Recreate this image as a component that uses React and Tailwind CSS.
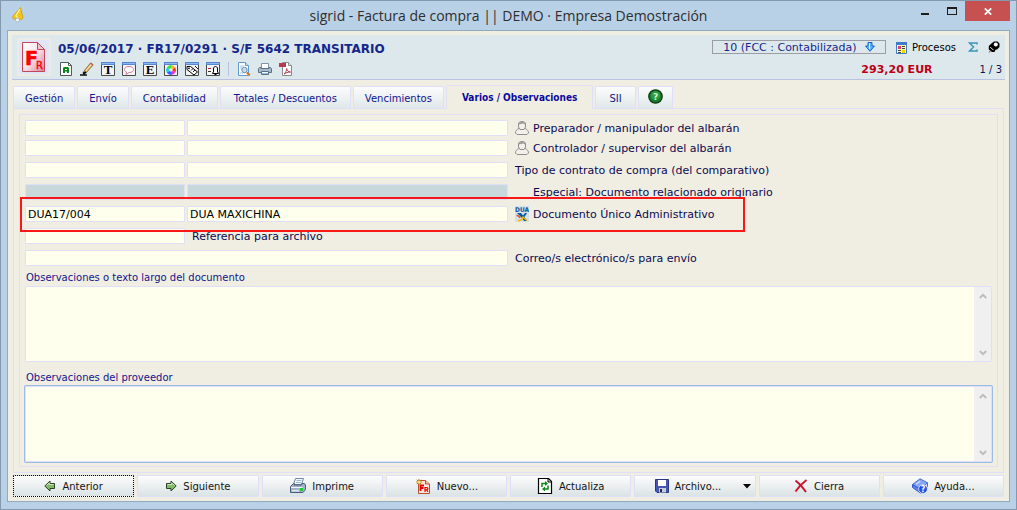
import React from "react";

const svg = (size, cls = "") => ({
  width: size,
  height: size,
  viewBox: `0 0 ${size} ${size}`,
  className: `shrink-0 ${cls}`,
  "aria-hidden": true,
});

/* ---------- title bar ---------- */

function BellIcon() {
  return (
    <svg {...svg(16)}>
      <path d="M9.500.500 2.500 8.500c-1.500 2-1 3 .5 3.500l7.500.5 1.500-1.500z" fill="#f5c518" stroke="#c99a10" strokeWidth=".8" />
      <path d="M9 2 5 8.500 6.500 11" fill="none" stroke="#fff3a0" strokeWidth="1.300" />
      <circle cx="6.500" cy="13" r="2" fill="#f4f6f8" stroke="#9aa9b8" strokeWidth=".7" />
    </svg>
  );
}

/* ---------- header icons ---------- */

function InvoiceIcon() {
  return (
    <svg width="24" height="32" viewBox="0 0 24 32" aria-hidden="true">
      <defs>
        <linearGradient id="invoiceFill" x1="0" y1="0" x2="1" y2="1">
          <stop offset="0" stopColor="#ffffff" />
          <stop offset=".5" stopColor="#f8e4ea" />
          <stop offset="1" stopColor="#dc7d92" />
        </linearGradient>
      </defs>
      <path d="M.5 1.500h15l7 7v22H.5z" fill="url(#invoiceFill)" stroke="#c2455e" />
      <path d="M15.500 1.500v7h7z" fill="#f4c5cf" stroke="#c2455e" />
      <text x="3" y="24" fontFamily="DejaVu Sans, sans-serif" fontWeight="700" fontSize="19" fill="#ff0000" stroke="#ff0000" strokeWidth=".6">
        F<tspan dx="-2" dy="4" fontSize="10" fontWeight="400" strokeWidth=".4">R</tspan>
      </text>
    </svg>
  );
}

function DocAIcon() {
  return (
    <svg {...svg(14)}>
      <path d="M1.500.5h8l3 3v10h-11z" fill="#fff" stroke="#4d5a55" />
      <path d="M9.500.5v3h3" fill="none" stroke="#4d5a55" />
      <path d="M4 11V6l1-1h4l1 1v5H8V9.500H6V11zM6 7v1h2V7z" fill="#0a8a1a" fillRule="evenodd" />
    </svg>
  );
}

function PencilIcon() {
  return (
    <svg {...svg(14)}>
      <path d="M4 9 10.500 1l2.500 2L6.500 10.500 3.500 11z" fill="#e2b768" stroke="#7a5a2c" strokeWidth=".8" />
      <path d="M5.500 9.500 11.500 2" stroke="#fbe5b5" strokeWidth="1" />
      <path d="m10.500 1 2.500 2" stroke="#c25a5a" strokeWidth="1.600" />
      <path d="M3.500 11 6 10l-2 2zM0 13h7" stroke="#111" strokeWidth="1.400" fill="#111" />
    </svg>
  );
}

function WindowIcon({ children }) {
  return (
    <svg {...svg(14)}>
      <path d="M.5.5h13v13H.5z" fill="#f4f4f4" stroke="#4a4a4a" />
      <path d="M0 0h14v3H0z" fill="#5586cf" />
      <path d="M1 1h12v1H1z" fill="#8db6ee" />
      {children}
    </svg>
  );
}

function LetterIcon({ letter }) {
  return (
    <WindowIcon>
      <text x="7" y="12" textAnchor="middle" fontFamily="Liberation Serif, serif" fontWeight="700" fontSize="13" fill="#000">
        {letter}
      </text>
    </WindowIcon>
  );
}

function SpeechIcon() {
  return (
    <WindowIcon>
      <path d="M7 4.500c3 0 4.500 1.300 4.500 3S10 10.500 7 10.500L4 12.500l.5-2.500C3.200 9.500 2.500 8.700 2.500 7.500c0-1.700 1.500-3 4.500-3z" fill="#fff" stroke="#cf7f9f" />
    </WindowIcon>
  );
}

function ColorIcon() {
  return (
    <WindowIcon>
      <path d="M7 8V3a5 5 0 0 1 4.300 2.500z" fill="#ffb020" />
      <path d="M7 8l4.300-2.500a5 5 0 0 1 0 5z" fill="#ff3030" />
      <path d="M7 8l4.300 2.500A5 5 0 0 1 7 13z" fill="#e030e0" />
      <path d="M7 8v5a5 5 0 0 1-4.300-2.500z" fill="#3060ff" />
      <path d="M7 8l-4.300 2.500a5 5 0 0 1 0-5z" fill="#20d0e0" />
      <path d="M7 8 2.700 5.500A5 5 0 0 1 7 3z" fill="#40e040" />
      <circle cx="7" cy="8" r="1.800" fill="#fff" fillOpacity=".75" />
    </WindowIcon>
  );
}

function TagIcon() {
  return (
    <WindowIcon>
      <path d="M2 4.500h3.500l7 5.500-3.500 3L2 7.500z" fill="#fff" stroke="#000" />
      <circle cx="4" cy="6.300" r=".9" fill="#000" />
      <path d="m6 8.500 2-2M8 10l2-2M10 4l3 3" stroke="#000" strokeWidth=".9" />
    </WindowIcon>
  );
}

function AlarmIcon() {
  return (
    <WindowIcon>
      <path d="M2 6.500h3" stroke="#c02040" />
      <path d="M2 9.500h3" stroke="#333" />
      <path d="M6.500 11.500V11L7.500 10V7c0-2 1-2.500 2-2.500s2 .5 2 2.500v3l1 1v.5zM8.500 12.500h2" fill="#fff" stroke="#000" />
    </WindowIcon>
  );
}

function PreviewIcon() {
  return (
    <svg {...svg(14)}>
      <path d="M1.500.5h7l3 3v10h-10z" fill="#fff" stroke="#5f9bd0" />
      <path d="M8.500.5v3h3" fill="#cfe3f5" stroke="#5f9bd0" />
      <path d="M3 4h4M3 6h2M3 11h3" stroke="#9cc4e8" />
      <circle cx="7.500" cy="8" r="2.700" fill="#c8dcf0" stroke="#6b89a8" />
      <path d="m9.800 10.500 3 2.700" stroke="#d07818" strokeWidth="2.200" />
    </svg>
  );
}

function SmallPrinterIcon() {
  return (
    <svg {...svg(14)}>
      <path d="M3.500 1.500h7v5h-7z" fill="#fff" stroke="#7d93ad" />
      <path d="M1.500 5.500h1.500v1h8v-1h1.500l1 1v4h-13v-4z" fill="#a9bacd" stroke="#5c7088" />
      <path d="M3.500 9.500h7v3h-7z" fill="#8ec2f2" stroke="#5c7088" />
      <path d="M4 10.500h6" stroke="#fff" />
    </svg>
  );
}

function PdfIcon() {
  return (
    <svg {...svg(14)}>
      <path d="M3.500.5h6l3 3v10h-9z" fill="#fff" stroke="#8a8a8a" />
      <path d="M9.500.5v3h3" fill="#eee" stroke="#8a8a8a" />
      <path d="M0 1h7v4H0z" fill="#b83a50" />
      <path d="M5 12c1.500-1 2.500-3 2.700-5.500C8 9 9.500 10 11.500 10 9 10 6.500 11 5 12z" fill="none" stroke="#b83a50" />
    </svg>
  );
}

function DownArrowIcon() {
  return (
    <svg {...svg(10)}>
      <path d="M3 .5h4v3.500h2.500L5 9.300.5 4H3z" fill="#5fb2f5" stroke="#1c62c8" />
      <path d="M4.500 1v6" stroke="#d6efff" />
    </svg>
  );
}

function ProcessIcon() {
  return (
    <svg {...svg(12)}>
      <path d="M.5.500h10v11H.5z" fill="#fffbb0" stroke="#3f7ad0" />
      <path d="M0 0h11v3H0z" fill="#3f7ad0" />
      <path d="M2 4h3v3H2z" fill="#e03a70" />
      <path d="M6 4.500h3M6 6.500h3M2 8.500h3M2 10.500h3" stroke="#4a4a20" />
      <path d="M6 8h3v3H6z" fill="#f0d800" />
    </svg>
  );
}

function PinIcon() {
  return (
    <svg {...svg(12)}>
      <path d="M4 2 6 .5h3.500l2 2V6L9 8.500 7.500 8.800 6.500 11H4L.8 8.500V5z" fill="#000" />
      <circle cx="7.800" cy="3.600" r="2" fill="#fff" />
      <path d="M2.300 6C3 7.300 4 8.300 5.500 8.800" fill="none" stroke="#fff" strokeWidth=".9" />
      <path d="M3 9.500.8 11.500" stroke="#555" />
    </svg>
  );
}

function HelpBadgeIcon() {
  return (
    <svg {...svg(15)}>
      <circle cx="7.500" cy="7.500" r="6.700" fill="#187a2c" stroke="#0b3d16" strokeWidth="1.300" />
      <circle cx="7.500" cy="6.500" r="4.600" fill="#2f9a45" />
      <text x="7.500" y="11" textAnchor="middle" fontFamily="DejaVu Sans, sans-serif" fontWeight="700" fontSize="9" fill="#c9f5cf">?</text>
    </svg>
  );
}

/* ---------- form icons ---------- */

function PersonIcon() {
  return (
    <svg {...svg(14)}>
      <path d="M4 7.500C1.500 8.500.5 10 .5 12l1.500 1.500h10l1.500-1.500c0-2-1-3.500-3.500-4.500" fill="#f1f0ea" stroke="#8f8f8f" />
      <path d="M3.500 3C3.500 1.300 5 .5 7 .5s3.500.8 3.500 2.500v3L9 8.500H5L3.500 6z" fill="#f1f0ea" stroke="#8f8f8f" />
      <path d="M4 3.500V2l1.500-1h3L10 2v1.500L8 2.500z" fill="#9c9c9c" />
    </svg>
  );
}

function DuaIcon() {
  return (
    <svg width="14" height="16" viewBox="0 0 14 16" className="shrink-0" aria-hidden="true">
      <path d="M0 0h14v16H0z" fill="#d3e0e8" />
      <text x="7" y="6" textAnchor="middle" fontFamily="DejaVu Sans Condensed, DejaVu Sans, sans-serif" fontWeight="700" fontSize="6.500" fill="#0b56a0">DUA</text>
      <path d="M2 7h4l2 2.500L10 7h2L9.500 11l2.500 4H9l-2-3z" fill="#0b56a0" />
      <path d="M1.500 9.500c2 0 3 1 3.500 2.500" fill="none" stroke="#e2542a" strokeWidth="1.500" />
      <path d="M3 14.500c3 .5 4.500-1.500 5.500-4" fill="none" stroke="#f5b812" strokeWidth="1.800" />
      <path d="m9 12 3 2.500" stroke="#f5b812" strokeWidth="1.500" />
    </svg>
  );
}

function Chevron({ down }) {
  return (
    <svg width="8" height="6" viewBox="0 0 8 6" aria-hidden="true">
      <path d={down ? "M.8 1 4 4.200 7.200 1" : "M.8 5 4 1.800 7.200 5"} fill="none" stroke="#bdbdbd" strokeWidth="2" />
    </svg>
  );
}

/* ---------- footer icons ---------- */

function GreenArrow({ flip }) {
  return (
    <svg width="12" height="12" viewBox="0 0 12 12" className="shrink-0" aria-hidden="true">
      <g transform={flip ? "translate(12 0) scale(-1 1)" : undefined}>
        <path d="M.8 6 6 1v2.500h4.500v5H6V11z" fill="#86b86a" stroke="#2c4424" />
        <path d="M2.500 5.500 5.300 3v1.500h4.200" fill="none" stroke="#cfe8bd" />
      </g>
    </svg>
  );
}

function PrinterIcon() {
  return (
    <svg {...svg(16)}>
      <path d="M5.500.5h8l-2 6h-8z" fill="#f4f8ff" stroke="#7088a8" />
      <path d="M6.500 2.500h5M6 4.500h5" stroke="#9fb4cf" />
      <path d="m.5 8.500 3-3h1l-.5 1.500h7.500l.5-1.500h2.500l1 1.500v4.500l-2.500 3H.5z" fill="#a3b2c6" stroke="#4a5d78" />
      <path d="M1 9.500h11.500" stroke="#eef3fa" />
      <path d="M2 12h7v1.500H2z" fill="#dfe7f2" />
      <path d="M10 10h3v3h-3z" fill="#17cf2e" />
    </svg>
  );
}

function NewIcon() {
  return (
    <svg {...svg(16)}>
      <path d="M3.500 2.500h7l4 3.500v9.500h-11z" fill="#fbe9e0" stroke="#b5502c" />
      <path d="M10.500 2.500V6h4" fill="#f2c9b4" stroke="#b5502c" />
      <path d="M5.500 13V7.500H9M5.500 10h3" stroke="#e80000" strokeWidth="1.800" fill="none" />
      <path d="M10 14V9.500h2l.8.700v.800l-.8.800h-2m1.500 0 1.500 2.200" stroke="#e80000" strokeWidth="1.200" fill="none" />
      <path d="M4 1v6M1 4h6M1.800 1.800l4.400 4.400M6.200 1.800 1.800 6.200" stroke="#b87a18" />
      <circle cx="4" cy="4" r="1.500" fill="#ffe27a" />
    </svg>
  );
}

function RefreshIcon() {
  return (
    <svg {...svg(16)}>
      <path d="M1.500.5h10l3 3v12h-13z" fill="#fff" stroke="#000" strokeWidth="1.200" />
      <path d="M11 .5V4h3.500" fill="none" stroke="#000" />
      <path d="M5 9V5.500h4M11 7.500v3.500H7" fill="none" stroke="#0b8a18" strokeWidth="1.500" />
      <path d="m8 3 3 2.500L8 8zM8 8.500 5 11l3 2.500z" fill="#0b8a18" />
    </svg>
  );
}

function SaveIcon() {
  return (
    <svg {...svg(14)}>
      <path d="M.5.500h13v13H2l-1.500-1.500z" fill="#4656b4" stroke="#2a3584" />
      <path d="M3 1h8v6H3z" fill="#fff" />
      <path d="M4 9h7v4.500H4z" fill="#c8ccd8" />
      <path d="M5 10h2v3H5z" fill="#20264c" />
    </svg>
  );
}

function CloseIcon() {
  return (
    <svg {...svg(14)}>
      <path d="M1.500 1.500c4 3 7.500 7 10.500 11.500M12.500 1C8.500 4 4.500 8 1.500 12.500" stroke="#cc1430" strokeWidth="2" fill="none" />
    </svg>
  );
}

function BookIcon() {
  return (
    <svg {...svg(16)}>
      <path d="M.5 6.500 8 .8l7.500 4-7 6.500z" fill="#86a8f6" stroke="#4a6cd8" />
      <path d="M.5 6.500v3l8 5.500v-3.700z" fill="#5a82ec" stroke="#3558cc" />
      <path d="M8.500 11.300v3.700l7-6.500V4.800z" fill="#dce6fd" stroke="#4a6cd8" />
      <path d="M4 6.300 8 3.200" stroke="#cfdcff" strokeWidth="1.300" />
      <circle cx="11" cy="11" r="4.400" fill="#2450dc" stroke="#dfe8ff" strokeWidth=".8" />
      <text x="11" y="14" textAnchor="middle" fontFamily="DejaVu Sans, sans-serif" fontWeight="700" fontSize="8" fill="#fff">?</text>
    </svg>
  );
}

/* ---------- data ---------- */

const tools = [
  ["Documento", <DocAIcon />],
  ["Editar", <PencilIcon />],
  ["Texto", <LetterIcon letter="T" />],
  ["Comentario", <SpeechIcon />],
  ["Etiqueta E", <LetterIcon letter="E" />],
  ["Color", <ColorIcon />],
  ["Etiquetas", <TagIcon />],
  ["Avisos", <AlarmIcon />],
];

const outputs = [
  ["Vista previa", <PreviewIcon />],
  ["Imprimir documento", <SmallPrinterIcon />],
  ["Exportar PDF", <PdfIcon />],
];

const tabs = [
  { name: "Gestión", pad: "px-[11px]" },
  { name: "Envío", pad: "px-[11px]" },
  { name: "Contabilidad", pad: "px-[11px]" },
  { name: "Totales / Descuentos", pad: "px-[13px]" },
  { name: "Vencimientos", pad: "px-[11px]" },
  { name: "Varios / Observaciones", active: true },
  { name: "SII", pad: "px-[13px]" },
];

const actions = [
  ["Anterior", <GreenArrow />],
  ["Siguiente", <GreenArrow flip />],
  ["Imprime", <PrinterIcon />],
  ["Nuevo...", <NewIcon />],
  ["Actualiza", <RefreshIcon />],
  ["Archivo...", <SaveIcon />],
  ["Cierra", <CloseIcon />],
  ["Ayuda...", <BookIcon />],
];

/* ---------- pieces ---------- */

const field = "h-4 rounded-[1px] border border-[#dfdff8] px-[2px] text-[11px] leading-none text-black outline-none";
const fieldLabel = "ml-[7px] flex items-center gap-1 whitespace-nowrap text-[11px] leading-4 text-[#0a0a50]";

function PairRow({ id, icon, indent, label, code = "", name = "", disabled, marked }) {
  const bg = disabled ? "bg-[#c9d8da]" : "bg-[#ffffee]";
  return (
    <div className="relative flex h-4 items-center">
      <input id={id} defaultValue={code} disabled={disabled} className={`${field} ${bg} w-40`} />
      <input aria-labelledby={`${id}-label`} defaultValue={name} disabled={disabled} className={`${field} ${bg} ml-[2px] w-[321px]`} />
      <label id={`${id}-label`} htmlFor={id} className={fieldLabel}>
        {icon}
        {indent && <span className="w-[14px]" />}
        <span className="pt-[2px]">{label}</span>
      </label>
      {marked && <div className="pointer-events-none absolute -left-[5px] -top-[9px] z-10 h-[35px] w-[725px] border-2 border-[#f81818]" />}
    </div>
  );
}

function SingleRow({ id, width, label }) {
  return (
    <div className="flex h-4 items-center">
      <input id={id} className={`${field} ${width} bg-[#ffffee]`} />
      <label htmlFor={id} className={fieldLabel}>
        <span className="pt-[2px]">{label}</span>
      </label>
    </div>
  );
}

function Notes({ id, label, focused }) {
  return (
    <div className={`flex flex-1 flex-col ${focused ? "mt-1" : ""}`}>
      <label htmlFor={id} className="flex h-5 items-end pb-[1px] pl-[1px] text-[10px] leading-[14px] text-[#14148c]">
        {label}
      </label>
      <div className={`flex flex-1 rounded-[1px] border border-[#dfdff8] bg-[#ffffee] ${focused ? "ring-1 ring-[#9dbbe3]" : ""}`}>
        <textarea id={id} className="min-w-0 flex-1 resize-none overflow-hidden bg-transparent px-[2px] text-[11px] outline-none" />
        <div className="flex w-[17px] flex-col items-center justify-between bg-[#f0f0f0] pb-[5px] pt-[6px]">
          <Chevron />
          <Chevron down />
        </div>
      </div>
    </div>
  );
}

export default function App() {
  return (
    <div className="flex min-h-screen flex-col border border-[#8299b0] bg-[#b9d1e6] font-['DejaVu_Sans',sans-serif]">
      <header className="grid h-[29px] grid-cols-[1fr_auto_1fr]">
        <div className="pl-[10px] pt-[6px]">
          <BellIcon />
        </div>
        <h1 className="pt-[3px] font-['Open_Sans','Noto_Sans',sans-serif] text-[14px] leading-[24px] text-[#2e2e2e]">
          sigrid - Factura de compra || DEMO · Empresa Demostración
        </h1>
        <div className="flex justify-end pr-[6px]">
          <button aria-label="Minimizar" className="flex h-5 w-[26px] items-center justify-center">
            <svg width="8" height="10" viewBox="0 0 8 10" aria-hidden="true"><path d="M0 7h8v2H0z" fill="#1c1c1c" /></svg>
          </button>
          <button aria-label="Maximizar" className="flex h-5 w-[27px] items-center justify-center">
            <svg width="10" height="8" viewBox="0 0 10 8" aria-hidden="true"><path d="M0 0h10v8H0zM1 2v5h8V2z" fill="#1c1c1c" fillRule="evenodd" /></svg>
          </button>
          <button aria-label="Cerrar ventana" className="flex h-5 w-[45px] items-center justify-center bg-[#c75050]">
            <svg width="8" height="7" viewBox="0 0 8 7" aria-hidden="true"><path d="m.8.3 6.400 6.400M7.200.3.8 6.700" stroke="#fff" strokeWidth="1.700" /></svg>
          </button>
        </div>
      </header>

      <main className="mx-[6px] mb-[7px] flex flex-1 flex-col border border-[#93a9be] bg-[#f0eee2] p-1">
        <section className="flex h-[45px] justify-between border-b border-[#b9c2e0] bg-[#dde8ed]">
          <div className="flex">
            <div className="ml-[5px] mt-[3px] flex h-[38px] w-[34px] items-center justify-center border-2 border-[#ecebe6] bg-[#e2e6f4]">
              <InvoiceIcon />
            </div>
            <div className="ml-[7px] pt-[6px]">
              <h2 className="text-[12px] font-bold leading-4 text-[#14278a]">05/06/2017 · FR17/0291 · S/F 5642 TRANSITARIO</h2>
              <div className="mt-[5px] flex items-center gap-[7px] pl-[1px]">
                {tools.map(([name, icon]) => (
                  <button key={name} aria-label={name}>{icon}</button>
                ))}
                <span className="mx-px h-[14px] w-px bg-[#b9c2e0]" />
                {outputs.map(([name, icon]) => (
                  <button key={name} aria-label={name}>{icon}</button>
                ))}
              </div>
            </div>
          </div>
          <div className="flex flex-col pr-2 pt-[5px]">
            <div className="flex h-[14px] items-center">
              <button className="flex h-[14px] w-[174px] items-center justify-center gap-2 whitespace-nowrap border border-[#9c9ca4] text-[11px] leading-none text-[#14278a]">
                10 (FCC : Contabilizada)
                <DownArrowIcon />
              </button>
              <button className="ml-[10px] flex items-center gap-1 pt-px text-[10px] leading-none text-black">
                <ProcessIcon />
                Procesos
              </button>
              <button aria-label="Totales" className="ml-3">
                <svg width="10" height="10" viewBox="0 0 10 10" aria-hidden="true">
                  <path d="M9 2.500V1H1.500L5.500 5l-4 4H9V7.500" fill="none" stroke="#3a96b4" strokeWidth="1.500" />
                </svg>
              </button>
              <button aria-label="Fijar" className="-mr-[3px] ml-[10px]"><PinIcon /></button>
            </div>
            <div className="mt-2 flex items-center justify-end gap-[47px] leading-4">
              <strong className="text-[11px] text-[#bb0014]">293,20 EUR</strong>
              <span className="-mr-[5px] text-[10px] text-[#14144c]">1 / 3</span>
            </div>
          </div>
        </section>

        <nav className="ml-px mt-[5px] flex items-end gap-[2px]">
          {tabs.map(({ name, pad, active }) =>
            active ? (
              <button key={name} className="relative z-10 -mb-px h-6 rounded-t-[2px] border border-b-0 border-[#dfdff8] bg-[#f0eee2] px-[15px] pb-px font-['DejaVu_Sans_Condensed','DejaVu_Sans',sans-serif] text-[10px] font-bold text-[#0a0aa0]">
                {name}
              </button>
            ) : (
              <button key={name} className={`h-[22px] rounded-t-[2px] border border-b-0 border-[#dfdff8] bg-linear-to-b from-[#fcfcfc] to-[#e0e8ea] pt-px text-[10px] text-[#14148c] ${pad}`}>
                {name}
              </button>
            )
          )}
          <button aria-label="Ayuda de la ficha" className="flex h-[22px] items-start rounded-t-[2px] border border-b-0 border-[#dfdff8] bg-linear-to-b from-[#fcfcfc] to-[#e0e8ea] px-[9px] pt-[2px]">
            <HelpBadgeIcon />
          </button>
        </nav>

        <div className="mx-px flex flex-1 flex-col border border-[#dfdff8] p-[5px]">
          <div className="flex flex-1 flex-col border border-[#dfdff8] px-[5px] pb-1 pt-[5px]">
            <div className="flex flex-col gap-[6px]">
              <div className="flex flex-col gap-1">
                <PairRow id="preparador" icon={<PersonIcon />} label="Preparador / manipulador del albarán" />
                <PairRow id="controlador" icon={<PersonIcon />} label="Controlador / supervisor del albarán" />
              </div>
              <PairRow id="contrato" label="Tipo de contrato de compra (del comparativo)" />
              <PairRow id="especial" indent disabled label="Especial: Documento relacionado originario" />
              <PairRow id="dua" icon={<DuaIcon />} label="Documento Único Administrativo" code="DUA17/004" name="DUA MAXICHINA" marked />
              <SingleRow id="referencia" width="w-40" label="Referencia para archivo" />
              <SingleRow id="correo" width="w-[483px]" label="Correo/s electrónico/s para envío" />
            </div>
            <Notes id="observaciones" label="Observaciones o texto largo del documento" />
            <Notes id="proveedor" label="Observaciones del proveedor" focused />
          </div>
        </div>

        <footer className="mx-px mt-[2px] grid grid-cols-8 gap-[3px]">
          {actions.map(([name, icon], i) => (
            <button
              key={name}
              className={`flex h-[22px] items-center justify-center gap-[6px] rounded-[1px] border bg-linear-to-b from-[#fcfcfc] to-[#dbe3e5] text-[10px] text-[#141414] ${
                i === 0 ? "border-dotted border-black" : "border-[#dfdff8]"
              }`}
            >
              {icon}
              {name}
              {name === "Archivo..." && (
                <svg width="8" height="5" viewBox="0 0 8 5" className="-mr-4 ml-4" aria-hidden="true"><path d="M0 0h8L4 4.500z" fill="#000" /></svg>
              )}
            </button>
          ))}
        </footer>
      </main>
    </div>
  );
}
